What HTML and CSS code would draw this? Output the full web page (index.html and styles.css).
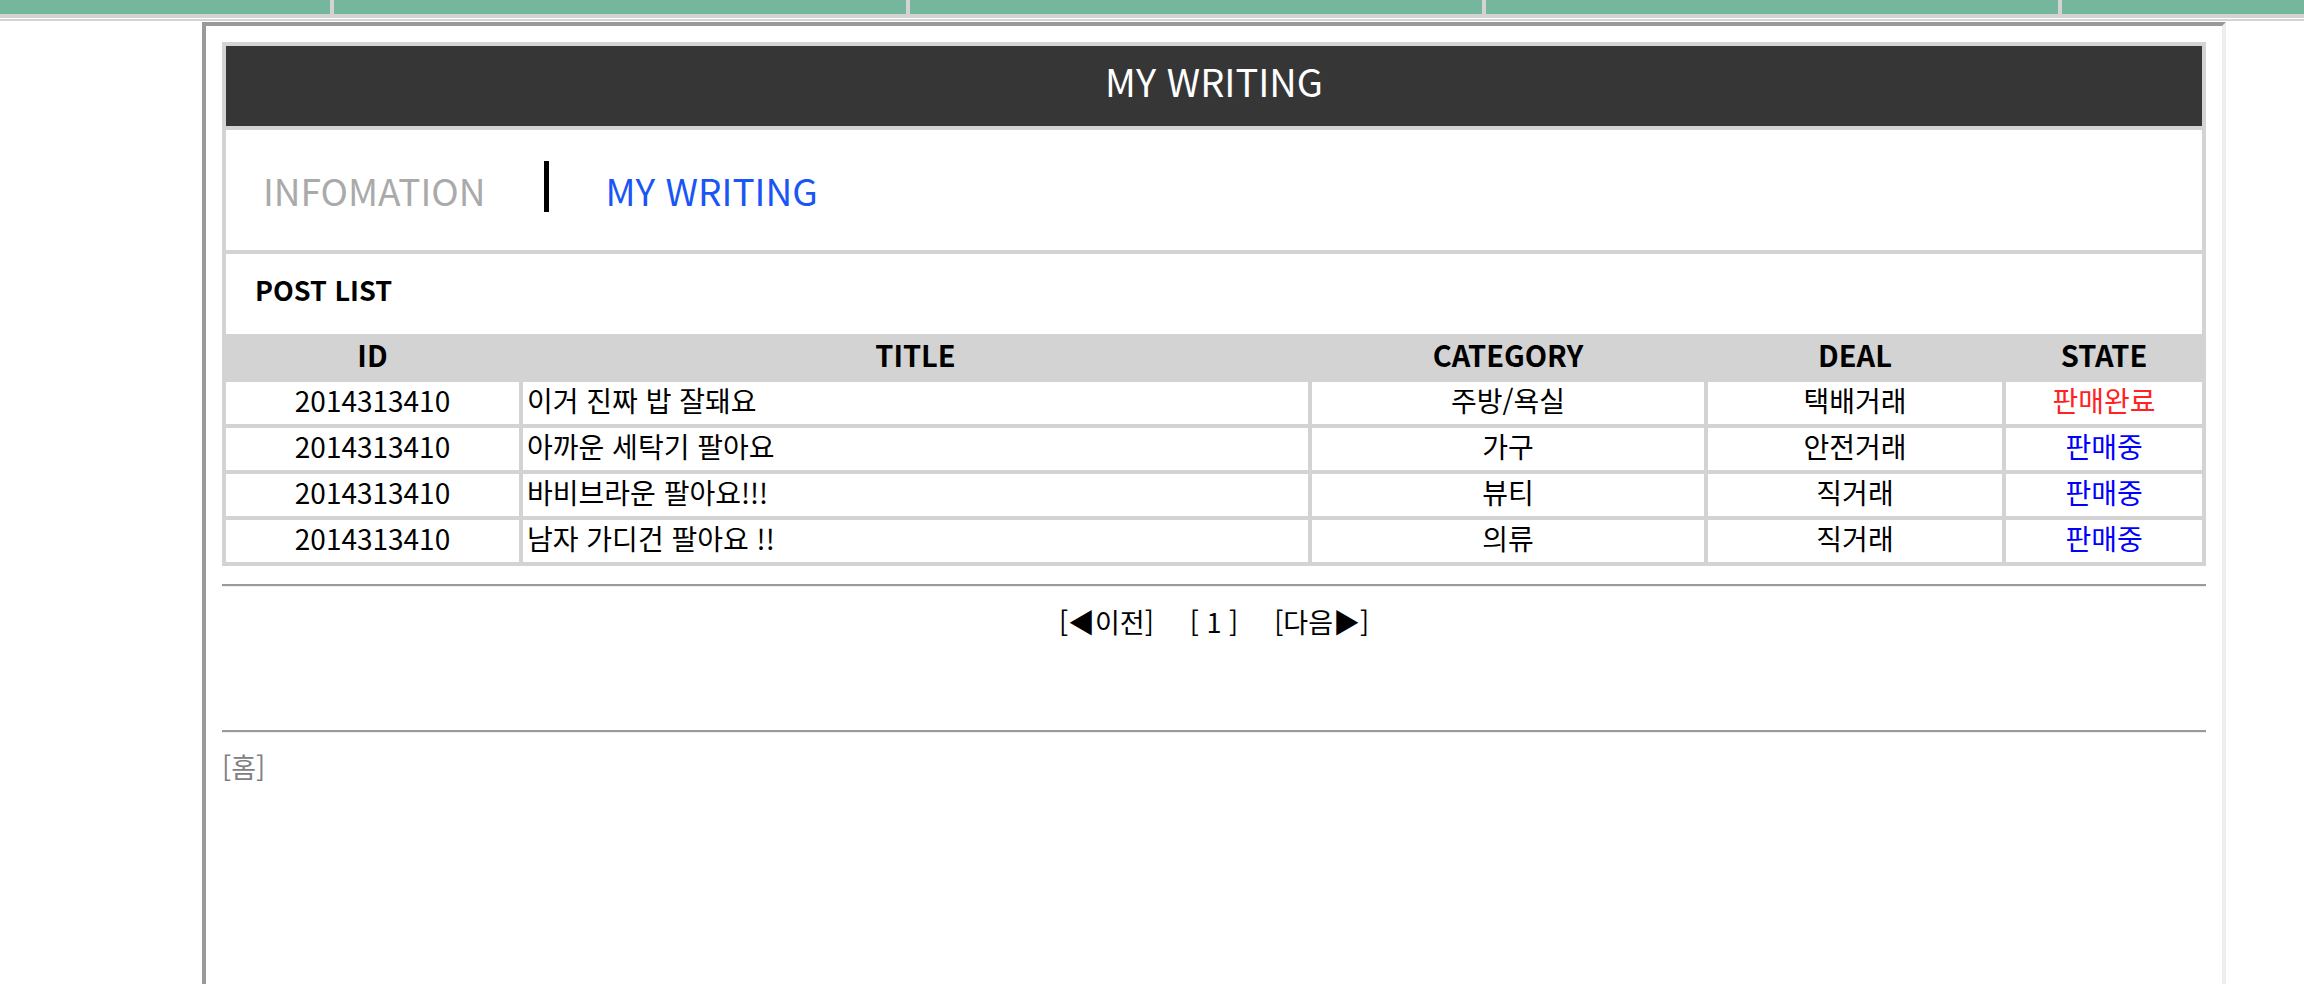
FILE: index.html
```html
<!DOCTYPE html>
<html lang="ko">
<head>
<meta charset="utf-8">
<title>MY WRITING</title>
<link rel="stylesheet" href="styles.css">
</head>
<body>
<nav class="topnav">
  <div class="topnav-items">
    <span class="topnav-item"></span>
    <span class="topnav-item"></span>
    <span class="topnav-item"></span>
    <span class="topnav-item"></span>
  </div>
</nav>
<div class="topline"></div>
<div class="page">
  <table class="board">
    <colgroup>
      <col class="c-id"><col class="c-title"><col class="c-cat"><col class="c-deal"><col class="c-state">
    </colgroup>
    <tr><td class="board-head" colspan="5">MY WRITING</td></tr>
    <tr>
      <td class="board-tabs" colspan="5">
        <div class="tabs">
          <a class="tab">INFOMATION</a>
          <span class="tab-bar"></span>
          <a class="tab tab-active">MY WRITING</a>
        </div>
      </td>
    </tr>
    <tr><td class="board-sub" colspan="5">POST LIST</td></tr>
    <tr class="cols">
      <th>ID</th><th>TITLE</th><th>CATEGORY</th><th>DEAL</th><th>STATE</th>
    </tr>
    <tr class="row">
      <td class="center">2014313410</td><td class="title">이거 진짜 밥 잘돼요</td><td class="center">주방/욕실</td><td class="center">택배거래</td><td class="center done">판매완료</td>
    </tr>
    <tr class="row">
      <td class="center">2014313410</td><td class="title">아까운 세탁기 팔아요</td><td class="center">가구</td><td class="center">안전거래</td><td class="center selling">판매중</td>
    </tr>
    <tr class="row">
      <td class="center">2014313410</td><td class="title">바비브라운 팔아요!!!</td><td class="center">뷰티</td><td class="center">직거래</td><td class="center selling">판매중</td>
    </tr>
    <tr class="row">
      <td class="center">2014313410</td><td class="title">남자 가디건 팔아요 !!</td><td class="center">의류</td><td class="center">직거래</td><td class="center selling">판매중</td>
    </tr>
  </table>
  <div class="rule rule-first"></div>
  <div class="pager">
    <span class="pg">[◀이전]</span><span class="pg">[ 1 ]</span><span class="pg">[다음▶]</span>
  </div>
  <div class="rule rule-second"></div>
  <div class="home">[홈]</div>
</div>
</body>
</html>
```
FILE: styles.css
```css
html, body {
  margin: 0;
  padding: 0;
  overflow: hidden;
  background: #fff;
  font-family: "Noto Sans CJK KR", "Noto Sans", sans-serif;
  color: #000;
}

.topnav {
  height: 14px;
  background: #74b79c;
  border-bottom: 4px solid #d3d3d3;
  overflow: hidden;
}

.topnav-items {
  display: flex;
  margin-left: 330px;
  height: 14px;
}

.topnav-item {
  flex: 0 0 572px;
  border-left: 4px solid #d3d3d3;
}

.topline {
  height: 2px;
  margin: 1px 0;
  background: #d3d3d3;
}

.page {
  margin-left: 202px;
  width: 1984px;
  min-height: 1000px;
  padding: 16px;
  border-style: solid;
  border-width: 4px;
  border-color: #999 #eee #eee #999;
}

.board {
  width: 1984px;
  table-layout: fixed;
  border-collapse: separate;
  border-spacing: 4px;
  background: #d3d3d3;
}

.c-id { width: 293px; }
.c-title { width: 785px; }
.c-cat { width: 392px; }
.c-deal { width: 294px; }
.c-state { width: 196px; }

.board td, .board th {
  padding: 0;
}

.board-head {
  height: 68px;
  background: #363636;
  color: #fff;
  font-size: 38px;
  text-align: center;
  line-height: 68px;
  vertical-align: top;
}

.board .board-head {
  padding: 1px 0 11px;
}

.board-tabs {
  height: 120px;
  background: #fff;
}

.tabs {
  display: flex;
  align-items: center;
  padding-left: 37px;
  font-size: 37px;
}

.tab {
  color: #aaa;
  text-decoration: none;
}

.tab-active {
  color: #1a56f5;
}

.tab-bar {
  width: 5px;
  height: 51px;
  background: #000;
  margin: 0 57px 0 58px;
  position: relative;
  top: -4px;
}

.board-sub {
  height: 70px;
  background: #fff;
  font-size: 27px;
  font-weight: bold;
  line-height: 70px;
  vertical-align: top;
}

.board .board-sub {
  padding: 1px 0 9px 29px;
}

.cols th {
  height: 24px;
  font-size: 29px;
  font-weight: bold;
  text-align: center;
  line-height: 24px;
  vertical-align: top;
}

.board .cols th {
  padding: 4px 0 12px;
}

.row td {
  height: 32px;
  background: #fff;
  font-size: 28px;
  line-height: 32px;
  vertical-align: top;
  white-space: nowrap;
}

.board .row td {
  padding: 2px 0 8px;
}

.board .row .title {
  padding-left: 4px;
}

.center {
  text-align: center;
}

.done {
  color: #f22;
}

.selling {
  color: #00f;
}

.rule {
  height: 0;
  border-top: 2px solid #9a9a9a;
  border-bottom: 1px solid #eee;
}

.rule-first {
  margin-top: 18px;
}

.pager {
  margin-top: 15px;
  height: 40px;
  line-height: 40px;
  font-size: 27px;
  text-align: center;
}

.pg {
  margin: 0 18px;
}

.rule-second {
  margin-top: 88px;
}

.home {
  margin-top: 14px;
  line-height: 40px;
  font-size: 27px;
  color: #808080;
}
```
